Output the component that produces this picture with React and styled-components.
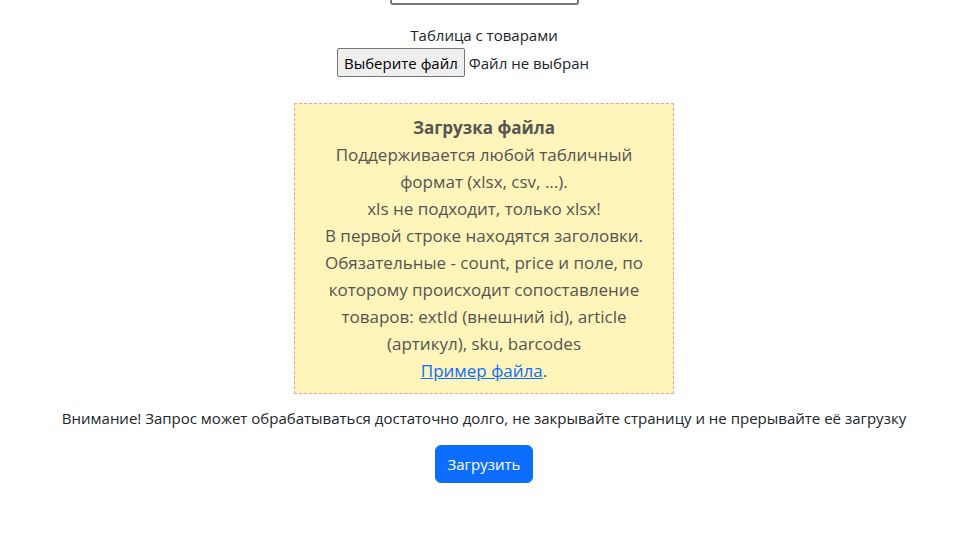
import React from "react";
import styled, { createGlobalStyle } from "styled-components";

const Global = createGlobalStyle`
  html, body { margin: 0; padding: 0; background: #fff; }
  body { font-family: "Open Sans", "Noto Sans", sans-serif; color: #212529; }
`;

const Page = styled.div`
  display: flex;
  flex-direction: column;
  align-items: center;
  padding-right: 4px;
  margin-top: -16px;
`;

const TextInput = styled.div`
  width: 185px;
  height: 17px;
  border: 2px solid #767676;
  border-radius: 3px;
  margin-bottom: 20px;
`;

const Label = styled.div`
  font-size: 15px;
  line-height: 20px;
  margin-bottom: 3px;
`;

const FileRow = styled.div`
  display: flex;
  align-items: center;
  gap: 4px;
  font-size: 15px;
  margin-right: 42px;
`;

const FileButton = styled.button`
  font-family: inherit;
  font-size: 15px;
  height: 29px;
  padding: 0 6px;
  background: #efefef;
  color: #000;
  border: 1px solid #767676;
  border-radius: 2px;
`;

const InfoBox = styled.div`
  margin-top: 26px;
  box-sizing: border-box;
  width: 380px;
  padding: 10px 16px 9px;
  background: #fff4b9;
  border: 1px dashed #f49c97;
  text-align: center;
  font-size: 17px;
  line-height: 27px;
  color: #555;
`;

const Title = styled.div`
  font-weight: 700;
`;

const Link = styled.a`
  color: #0d6efd;
  text-decoration: underline;
`;

const Warning = styled.div`
  margin-top: 12px;
  font-size: 15px;
  line-height: 24px;
`;

const Submit = styled.button`
  margin-top: 15px;
  font-family: inherit;
  font-size: 15px;
  height: 38px;
  padding: 0 12px;
  background: #0d6efd;
  color: #fff;
  border: 1px solid #0d6efd;
  border-radius: 6px;
`;

export default function App() {
  return (
    <>
      <Global />
      <Page>
        <TextInput />
        <Label>Таблица с товарами</Label>
        <FileRow>
          <FileButton>Выберите файл</FileButton>
          <span>Файл не выбран</span>
        </FileRow>
        <InfoBox>
          <Title>Загрузка файла</Title>
          Поддерживается любой табличный формат (xlsx, csv, ...).
          <br />
          xls не подходит, только xlsx!
          <br />
          В первой строке находятся заголовки. Обязательные - count, price и
          поле, по которому происходит сопоставление товаров: extId (внешний
          id), article (артикул), sku, barcodes
          <br />
          <Link href="#">Пример файла</Link>.
        </InfoBox>
        <Warning>
          Внимание! Запрос может обрабатываться достаточно долго, не закрывайте
          страницу и не прерывайте её загрузку
        </Warning>
        <Submit>Загрузить</Submit>
      </Page>
    </>
  );
}
